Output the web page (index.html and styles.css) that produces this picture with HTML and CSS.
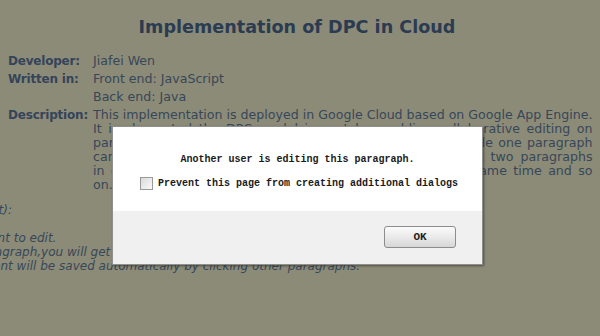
FILE: index.html
```html
<!DOCTYPE html>
<html>
<head>
<meta charset="utf-8">
<link rel="stylesheet" href="styles.css">
</head>
<body>
<div class="page">
  <h1 class="title">Implementation of DPC in Cloud</h1>
  <table class="info">
    <tr><th>Developer:</th><td>Jiafei Wen</td></tr>
    <tr><th>Written in:</th><td>Front end: JavaScript</td></tr>
    <tr><th></th><td>Back end: Java</td></tr>
    <tr><th>Description:</th><td class="desc">
      <div class="jl">This implementation is deployed in Google Cloud based on Google App Engine.</div>
      <div class="jl">It implemented the DPC model in part by enabling collaborative editing on</div>
      <div class="jl">paragraphs, that is, multiple users can edit a document while one paragraph</div>
      <div class="jl">can be edited by only one user at a time. Users can edit two paragraphs</div>
      <div class="jl">in one document concurrently, or edit documents at the same time and so</div>
      <div>on.</div>
    </td></tr>
  </table>
  <div class="usage">
    <div class="usage-head">Usage (for the current client):</div>
    <div class="step">Click on a paragraph you want to edit.</div>
    <div class="step">If another user edits the paragraph,you will get a warning.</div>
    <div class="step">When you're done, the content will be saved automatically by clicking other paragraphs.</div>
  </div>
</div>
<div class="dialog">
  <div class="dialog-body">
    <div class="msg">Another user is editing this paragraph.</div>
    <label class="opt"><span class="box"></span><span>Prevent this page from creating additional dialogs</span></label>
  </div>
  <div class="dialog-foot">
    <button class="ok">OK</button>
  </div>
</div>
</body>
</html>
```
FILE: styles.css
```css
html, body {
  margin: 0;
  padding: 0;
}
body {
  width: 600px;
  height: 336px;
  overflow: hidden;
  background: #8c8b77;
  font-family: "DejaVu Sans", Verdana, sans-serif;
  font-size: 12px;
  color: #37475a;
  position: relative;
}
.page {
  padding: 0 12px 0 6px;
}
.title {
  margin: 0;
  padding-top: 16px;
  font-size: 17.6px;
  line-height: 22px;
  font-weight: bold;
  color: #2b3b52;
  text-align: center;
}
.info {
  margin-top: 14px;
  border-collapse: collapse;
  width: 582px;
}
.info th, .info td {
  padding: 2px 2px;
  vertical-align: top;
  line-height: 14px;
}
.info td {
  font-size: 12.6px;
}
.info th {
  text-align: left;
  white-space: nowrap;
  color: #34445a;
  width: 1%;
  padding-right: 3px;
  letter-spacing: -0.2px;
}
.desc .jl {
  text-align: justify;
  text-align-last: justify;
  white-space: nowrap;
}
.usage {
  margin-top: 9px;
  margin-left: -180px;
  font-style: italic;
  line-height: 14px;
}
.usage-head {
  margin-bottom: 14px;
  margin-left: 7px;
}
.dialog {
  position: absolute;
  left: 112px;
  top: 126px;
  width: 369px;
  height: 137px;
  border: 1px solid #8f8f8f;
  box-shadow: 1px 1px 2px rgba(40,40,30,0.6);
  background: #fff;
  display: flex;
  flex-direction: column;
  font-family: "Liberation Mono", monospace;
  font-size: 10px;
  font-weight: bold;
  color: #1a1a1a;
}
.dialog-body {
  height: 84px;
  background: #fff;
  padding: 0 0 0 27px;
  box-sizing: border-box;
}
.msg {
  text-align: center;
  padding: 27px 27px 0 0;
  line-height: 12px;
}
.opt {
  display: flex;
  align-items: center;
  gap: 5px;
  margin-top: 11px;
  line-height: 12px;
}
.box {
  width: 11px;
  height: 11px;
  border: 1px solid #9a9a9a;
  background: linear-gradient(135deg, #d9d9d9, #fafafa);
  box-sizing: content-box;
}
.dialog-foot {
  flex: 1;
  background: #f0f0f0;
  display: flex;
  justify-content: flex-end;
  align-items: flex-start;
  padding: 15px 26px 0 0;
}
.ok {
  width: 72px;
  height: 22px;
  border: 1px solid #8c8c8c;
  border-radius: 3px;
  background: linear-gradient(#fbfbfb, #e6e6e6 60%, #d6d6d6);
  font-family: "Liberation Mono", monospace;
  font-size: 11px;
  font-weight: bold;
  color: #222;
  padding: 0;
}
```
